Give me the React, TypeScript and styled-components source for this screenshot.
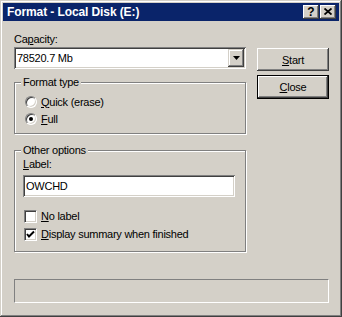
import React from "react";
import styled, { createGlobalStyle } from "styled-components";

const GlobalStyle = createGlobalStyle`
  html, body {
    margin: 0;
    padding: 0;
    background: #d4d0c8;
  }
  body {
    font-family: "Liberation Sans", Arial, sans-serif;
    font-size: 11px;
    letter-spacing: -0.25px;
    color: #000;
  }
`;

const Window = styled.div`
  width: 342px;
  height: 317px;
  box-sizing: border-box;
  padding: 3px;
  background: #d4d0c8;
  box-shadow: inset -1px -1px 0 #404040, inset 1px 1px 0 #d4d0c8,
    inset -2px -2px 0 #808080, inset 2px 2px 0 #fff;
  display: flex;
  flex-direction: column;
`;

const TitleBar = styled.div`
  height: 18px;
  display: flex;
  align-items: center;
  padding: 0 3px 0 4px;
  background: #0a246a;
`;

const TitleText = styled.div`
  flex: 1;
  color: #fff;
  font-weight: 700;
  font-size: 12px;
  letter-spacing: -0.1px;
  line-height: 18px;
  white-space: nowrap;
`;

const TitleButtons = styled.div`
  display: flex;
  gap: 1px;
`;

const TitleButton = styled.div`
  width: 16px;
  height: 14px;
  box-sizing: border-box;
  background: #d4d0c8;
  box-shadow: inset -1px -1px 0 #404040, inset 1px 1px 0 #fff,
    inset -2px -2px 0 #808080;
  display: flex;
  align-items: center;
  justify-content: center;
  font-weight: 700;
  font-size: 12px;
  letter-spacing: 0;
  line-height: 14px;
  padding-bottom: 1px;
`;

const Body = styled.div`
  display: flex;
  flex-direction: column;
  padding: 12px 10px 0 11px;
`;

const Main = styled.div`
  display: flex;
  align-items: flex-start;
`;

const LeftColumn = styled.div`
  width: 232px;
  display: flex;
  flex-direction: column;
`;

const RightColumn = styled.div`
  margin-left: 11px;
  padding-top: 15px;
  width: 72px;
  display: flex;
  flex-direction: column;
  gap: 4px;
`;

const FieldLabel = styled.div<{ $gap: number }>`
  line-height: 13px;
  margin-bottom: ${(p) => p.$gap}px;
`;

const Key = styled.span`
  text-decoration: underline;
  text-underline-offset: 1px;
`;

const sunken = `
  background: #fff;
  box-shadow: inset 1px 1px 0 #808080, inset -1px -1px 0 #fff,
    inset 2px 2px 0 #404040, inset -2px -2px 0 #d4d0c8;
`;

const Combo = styled.div`
  height: 22px;
  box-sizing: border-box;
  padding: 2px;
  display: flex;
  align-items: center;
  ${sunken}
`;

const ComboValue = styled.div`
  flex: 1;
  padding-left: 1px;
  line-height: 18px;
`;

const DropButton = styled.div`
  width: 16px;
  height: 18px;
  box-sizing: border-box;
  background: #d4d0c8;
  box-shadow: inset -1px -1px 0 #404040, inset 1px 1px 0 #d4d0c8,
    inset -2px -2px 0 #808080, inset 2px 2px 0 #fff;
  display: flex;
  align-items: center;
  justify-content: center;
`;

const GroupBox = styled.div<{ $top: number; $height: number }>`
  position: relative;
  margin-top: ${(p) => p.$top}px;
  height: ${(p) => p.$height}px;
  box-sizing: border-box;
  border: 1px solid #808080;
  box-shadow: 1px 1px 0 #fff, inset 1px 1px 0 #fff;
  display: flex;
  flex-direction: column;
`;

const GroupTitle = styled.div`
  position: absolute;
  top: -7px;
  left: 6px;
  padding: 0 2px;
  line-height: 13px;
  background: #d4d0c8;
`;

const RadioList = styled.div`
  padding: 10px 0 0 10px;
  display: flex;
  flex-direction: column;
`;

const OptionRow = styled.div<{ $h: number }>`
  height: ${(p) => p.$h}px;
  display: flex;
  align-items: center;
  gap: 4px;
`;

const RadioDot = styled.span<{ $on: boolean }>`
  width: 12px;
  height: 12px;
  box-sizing: border-box;
  border-radius: 50%;
  background: #fff;
  border: 1px solid;
  border-color: #808080 #fff #fff #808080;
  box-shadow: inset 1px 1px 0 #404040, inset -1px -1px 0 #d4d0c8;
  display: flex;
  align-items: center;
  justify-content: center;

  &::after {
    content: "";
    width: 4px;
    height: 4px;
    border-radius: 50%;
    background: #000;
    display: ${(p) => (p.$on ? "block" : "none")};
  }
`;

const OtherInner = styled.div`
  padding: 7px 9px 0 8px;
  display: flex;
  flex-direction: column;
`;

const TextInput = styled.div`
  width: 212px;
  height: 22px;
  box-sizing: border-box;
  padding: 2px 3px;
  line-height: 18px;
  ${sunken}
`;

const CheckList = styled.div`
  margin-top: 10px;
  padding-left: 1px;
  display: flex;
  flex-direction: column;
`;

const CheckBox = styled.span`
  width: 13px;
  height: 13px;
  box-sizing: border-box;
  background: #fff;
  border: 1px solid;
  border-color: #808080 #fff #fff #808080;
  box-shadow: inset 1px 1px 0 #404040, inset -1px -1px 0 #d4d0c8;
  display: flex;
  align-items: center;
  justify-content: center;
`;

const Button = styled.div<{ $default?: boolean }>`
  height: ${(p) => (p.$default ? 24 : 23)}px;
  box-sizing: border-box;
  display: flex;
  align-items: center;
  justify-content: center;
  background: #d4d0c8;
  box-shadow: ${(p) =>
    p.$default
      ? "inset 0 0 0 1px #000, inset -2px -2px 0 #404040, inset 2px 2px 0 #fff, inset -3px -3px 0 #808080"
      : "inset -1px -1px 0 #404040, inset 1px 1px 0 #fff, inset -2px -2px 0 #808080"};
`;

const StatusBar = styled.div`
  margin-top: 27px;
  width: 315px;
  height: 24px;
  box-sizing: border-box;
  border: 1px solid;
  border-color: #808080 #fff #fff #808080;
`;

const Radio = ({ on, children }: { on: boolean; children: React.ReactNode }) => (
  <OptionRow $h={17}>
    <RadioDot $on={on} />
    <span>{children}</span>
  </OptionRow>
);

const Check = ({ on, children }: { on: boolean; children: React.ReactNode }) => (
  <OptionRow $h={18}>
    <CheckBox>
      {on && (
        <svg width="9" height="9" viewBox="0 0 9 9">
          <polyline points="1,4 3,6.5 8,1.5" fill="none" stroke="#000" strokeWidth="2" />
        </svg>
      )}
    </CheckBox>
    <span>{children}</span>
  </OptionRow>
);

export default function App() {
  return (
    <>
      <GlobalStyle />
      <Window>
        <TitleBar>
          <TitleText>Format - Local Disk (E:)</TitleText>
          <TitleButtons>
            <TitleButton>?</TitleButton>
            <TitleButton>
              <svg width="8" height="7" viewBox="0 0 8 7">
                <path d="M0.5 0.5 L7.5 6.5 M7.5 0.5 L0.5 6.5" stroke="#000" strokeWidth="1.8" />
              </svg>
            </TitleButton>
          </TitleButtons>
        </TitleBar>
        <Body>
          <Main>
            <LeftColumn>
              <FieldLabel $gap={1}>
                Ca<Key>p</Key>acity:
              </FieldLabel>
              <Combo>
                <ComboValue>78520.7 Mb</ComboValue>
                <DropButton>
                  <svg width="7" height="4" viewBox="0 0 7 4">
                    <polygon points="0,0 7,0 3.5,4" fill="#000" />
                  </svg>
                </DropButton>
              </Combo>

              <GroupBox $top={13} $height={52}>
                <GroupTitle>Format type</GroupTitle>
                <RadioList>
                  <Radio on={false}>
                    <Key>Q</Key>uick (erase)
                  </Radio>
                  <Radio on={true}>
                    <Key>F</Key>ull
                  </Radio>
                </RadioList>
              </GroupBox>

              <GroupBox $top={16} $height={102}>
                <GroupTitle>Other options</GroupTitle>
                <OtherInner>
                  <FieldLabel $gap={4}>
                    <Key>L</Key>abel:
                  </FieldLabel>
                  <TextInput>OWCHD</TextInput>
                  <CheckList>
                    <Check on={false}>
                      <Key>N</Key>o label
                    </Check>
                    <Check on={true}>
                      <Key>D</Key>isplay summary when finished
                    </Check>
                  </CheckList>
                </OtherInner>
              </GroupBox>
            </LeftColumn>

            <RightColumn>
              <Button>
                <span>
                  <Key>S</Key>tart
                </span>
              </Button>
              <Button $default>
                <span>
                  <Key>C</Key>lose
                </span>
              </Button>
            </RightColumn>
          </Main>
          <StatusBar />
        </Body>
      </Window>
    </>
  );
}
